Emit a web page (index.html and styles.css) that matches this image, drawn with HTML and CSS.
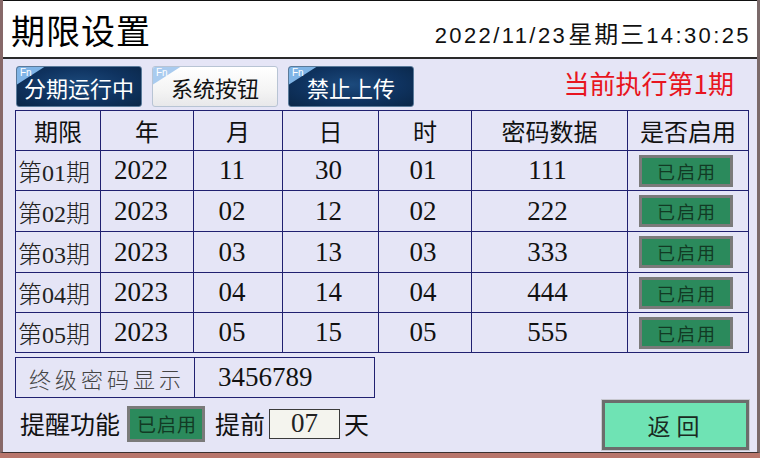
FILE: index.html
```html
<!DOCTYPE html>
<html lang="zh-CN">
<head>
<meta charset="utf-8">
<title>期限设置</title>
<link rel="stylesheet" href="styles.css">
</head>
<body>
<div class="screen">
  <header class="header">
    <h1 class="title">期限设置</h1>
    <div class="clock">2022/11/23<span class="wk">星期三</span>14:30:25</div>
  </header>
  <main class="panel">
    <div class="toolbar">
      <button class="fn dark">分期运行中</button>
      <button class="fn light">系统按钮</button>
      <button class="fn dark">禁止上传</button>
      <div class="current">当前执行第1期</div>
    </div>
    <div class="grid">
      <div class="th">期限</div><div class="th">年</div><div class="th">月</div><div class="th">日</div><div class="th">时</div><div class="th">密码数据</div><div class="th">是否启用</div>

      <div class="td first">第01期</div><div class="td num off">2022</div><div class="td num off">11</div><div class="td num">30</div><div class="td num">01</div><div class="td num">111</div><div class="td"><span class="badge">已启用</span></div>

      <div class="td first">第02期</div><div class="td num off">2023</div><div class="td num off">02</div><div class="td num">12</div><div class="td num">02</div><div class="td num">222</div><div class="td"><span class="badge">已启用</span></div>

      <div class="td first">第03期</div><div class="td num off">2023</div><div class="td num off">03</div><div class="td num">13</div><div class="td num">03</div><div class="td num">333</div><div class="td"><span class="badge">已启用</span></div>

      <div class="td first">第04期</div><div class="td num off">2023</div><div class="td num off">04</div><div class="td num">14</div><div class="td num">04</div><div class="td num">444</div><div class="td"><span class="badge">已启用</span></div>

      <div class="td first">第05期</div><div class="td num off">2023</div><div class="td num off">05</div><div class="td num">15</div><div class="td num">05</div><div class="td num">555</div><div class="td"><span class="badge">已启用</span></div>
    </div>
    <div class="final">
      <div class="final-label">终级密码显示</div>
      <div class="final-value">3456789</div>
    </div>
    <div class="bottom">
      <div class="remind">
        <span class="lbl">提醒功能</span>
        <span class="badge big">已启用</span>
        <span class="lbl ahead">提前</span>
        <span class="input">07</span>
        <span class="lbl">天</span>
      </div>
      <button class="back">返回</button>
    </div>
  </main>
</div>
</body>
</html>
```
FILE: styles.css
```css
* { box-sizing: border-box; }
html, body { margin: 0; padding: 0; }
body {
  width: 760px;
  height: 458px;
  background: #b8766c;
  font-family: "Noto Sans CJK SC", "Noto Sans", sans-serif;
  overflow: hidden;
}
.screen {
  width: 760px;
  height: 453px;
  border-left: 3px solid #876868;
  border-right: 3px solid #7a6a6a;
  border-bottom: 1px solid #3a3030;
  display: flex;
  flex-direction: column;
  background: #e5e5f6;
}
.header {
  height: 59px;
  flex: none;
  background: #ffffff;
  border-top: 1px solid #111;
  border-bottom: 2px solid #2a2a2a;
  display: flex;
  align-items: center;
  justify-content: space-between;
  padding: 0 8px 0 8px;
}
.title {
  margin: 0;
  font-size: 34px;
  font-weight: 400;
  color: #000;
  line-height: 1;
  letter-spacing: 1px;
  margin-top: 2px;
}
.clock {
  font-family: "Liberation Sans", Arial, sans-serif;
  font-size: 22px;
  letter-spacing: 2.4px;
  color: #111;
  margin-top: 6px;
  margin-right: -2px;
}
.clock .wk {
  font-family: "Noto Sans CJK SC", sans-serif;
  font-size: 24px;
  letter-spacing: 2px;
  padding: 0 0 0 1px;
}
.panel {
  flex: 1;
  padding: 7px 9px 0 12px;
  display: flex;
  flex-direction: column;
}
.toolbar {
  display: flex;
  align-items: center;
  gap: 10px;
  height: 40px;
  padding-left: 1px;
}
.fn {
  position: relative;
  width: 126px;
  height: 41px;
  border-radius: 3px;
  font-family: "Noto Sans CJK SC", sans-serif;
  font-size: 22px;
  padding: 2px 0 0 0;
  line-height: 1;
  overflow: hidden;
  cursor: pointer;
}
.fn::before {
  content: "";
  position: absolute;
  left: 0;
  top: 0;
  width: 28px;
  height: 18px;
  clip-path: polygon(0 0, 100% 0, 0 100%);
}
.fn::after {
  content: "Fn";
  position: absolute;
  left: 3px;
  top: 0;
  font-family: "Liberation Sans", sans-serif;
  font-size: 10px;
  line-height: 11px;
  color: #ffffff;
}
.fn.dark {
  color: #ffffff;
  border: 1px solid #5a7a9a;
  background: radial-gradient(ellipse at 50% 45%, #1c4a7c 0%, #0f3360 55%, #0a2748 100%);
}
.fn.dark::before { background: #7fb4e6; }
.fn.light {
  color: #111;
  border: 1px solid #b8c4d4;
  background: linear-gradient(#ffffff, #f4f4f4 60%, #e8e8ea);
}
.fn.light::before { background: #a9cbef; }
.current {
  margin-left: auto;
  margin-right: 14px;
  color: #e81420;
  font-size: 26px;
  line-height: 1;
  margin-top: -6px;
}
.grid {
  margin-top: 4px;
  width: 734px;
  display: grid;
  grid-template-columns: 84px 92px 88px 95px 92px 155px 120px;
  grid-template-rows: 39px 39px 40px 40px 39px 39px;
  gap: 1px;
  padding: 1px;
  background: #202070;
}
.th, .td {
  background: #e5e5f6;
  display: flex;
  align-items: center;
  justify-content: center;
  color: #111;
}
.th {
  font-size: 24px;
  line-height: 1;
}
.td.first {
  justify-content: flex-start;
  padding-left: 2px;
  font-family: "Liberation Serif", "Noto Sans CJK SC", serif;
  font-size: 24px;
  font-weight: 300;
  color: #222;
}
.td.num {
  font-family: "Liberation Serif", serif;
  font-size: 27px;
  padding-right: 4px;
}
.td.num.off { padding-right: 12px; }
.badge {
  display: flex;
  align-items: center;
  justify-content: center;
  width: 94px;
  height: 32px;
  margin-left: -4px;
  background: #2b8a5c;
  border: 3px solid #7a7a7a;
  color: #123a24;
  font-size: 18px;
  font-weight: 400;
  letter-spacing: 2px;
  padding-left: 2px;
}
.final {
  margin-top: 4px;
  width: 360px;
  height: 41px;
  display: grid;
  grid-template-columns: 178px 179px;
  gap: 1px;
  padding: 1px;
  background: #202070;
}
.final-label, .final-value {
  background: #e5e5f6;
  display: flex;
  align-items: center;
}
.final-label {
  justify-content: center;
  font-size: 22px;
  letter-spacing: 4px;
  color: #444;
  font-weight: 300;
  padding-left: 4px;
}
.final-value {
  font-family: "Liberation Serif", serif;
  font-size: 27px;
  color: #111;
  padding-left: 23px;
}
.bottom {
  margin-top: 2px;
  display: flex;
  align-items: center;
  justify-content: space-between;
  width: 734px;
  height: 49px;
}
.remind {
  display: flex;
  align-items: center;
  padding-left: 5px;
  margin-top: -2px;
}
.lbl {
  font-size: 25px;
  color: #111;
  line-height: 1;
}
.badge.big {
  width: 78px;
  height: 36px;
  margin: 0 10px 0 7px;
  font-size: 19px;
  letter-spacing: 1px;
}
.input {
  width: 71px;
  height: 30px;
  margin: 0 4px 0 4px;
  background: #f4f4ee;
  border: 1px solid #3a3a3a;
  display: flex;
  align-items: center;
  justify-content: center;
  font-family: "Liberation Serif", serif;
  font-size: 27px;
  color: #222;
}
.back {
  width: 147px;
  height: 50px;
  background: #6fe3b4;
  border: 3px solid #6c6c6c;
  box-shadow: 0 0 0 1px #c8c8d0;
  font-family: "Noto Sans CJK SC", sans-serif;
  font-size: 23px;
  letter-spacing: 6px;
  padding-left: 8px;
  color: #1a2a22;
  cursor: pointer;
}
```
